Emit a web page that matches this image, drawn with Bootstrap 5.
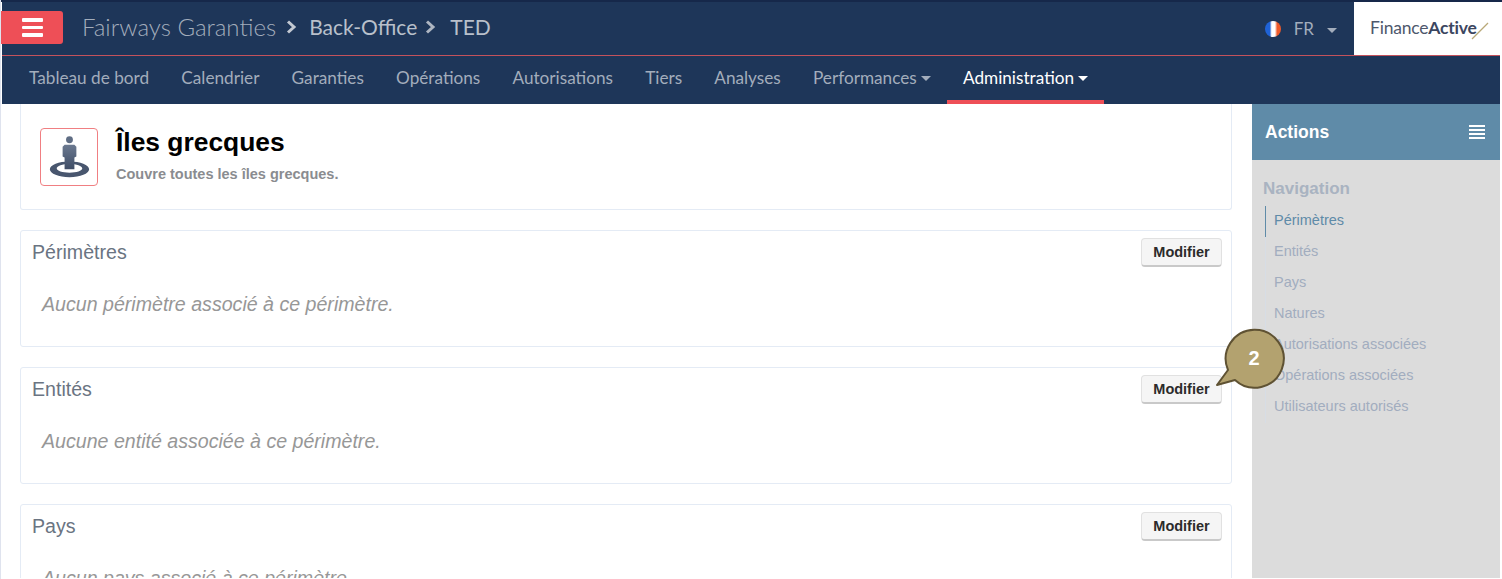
<!DOCTYPE html>
<html lang="fr">
<head>
<meta charset="utf-8">
<title>Fairways Garanties</title>
<link rel="stylesheet" href="https://cdn.jsdelivr.net/npm/bootstrap@5.3.0/dist/css/bootstrap.min.css">
<style>
html,body{height:579px;overflow:hidden;background:#fff}
body{font-family:"Liberation Sans",Arial,sans-serif;position:relative}
.shell{height:579px;padding:2px 2px 1px 1px;background:#fff;border-left:1px solid #dfe3ee;display:flex;flex-direction:column;overflow:hidden;box-shadow:inset 0 2px 0 #16284a}
.topbar{height:54px;flex:none;background:#1e3659;border-bottom:1px solid #c4525c;font-family:Lato,sans-serif}
.burger{width:62px;height:33px;margin:9px 0 0 -1px;background:#ee4f57;border-radius:0 3px 3px 0;border:0;padding:0;display:flex;flex-direction:column;gap:4px;align-items:center;justify-content:center}
.burger span{display:block;width:21px;height:3.5px;background:#fff;border-radius:1px}
.crumbs{margin-left:19px;padding-bottom:4px;color:#a3adbc;font-weight:300;display:flex;align-items:center;font-size:24px;line-height:26px}
.crumbs b{font-weight:400;color:#b9c0cb;font-size:21px}
.crumbs svg{flex:none}
.crumbs .sep1{margin:0 12px 0 10px}
.crumbs .sep2{margin:0 14px 0 8px}
.lang{color:#a3adbc;font-size:17px;margin-right:17px;gap:13px}
.flagdot{width:16px;height:16px;border-radius:50%;background:linear-gradient(90deg,#1f62d6 0 30%,#fff 42% 62%,#ee5a2a 76%)}
.caretdown{display:inline-block;border-left:5px solid transparent;border-right:5px solid transparent;border-top:5px solid currentColor}
.lang .caretdown{margin-top:3px}
.logobox{width:146px;height:53px;background:#fff;display:flex;align-items:center;color:#4e586c;font-size:17.5px;letter-spacing:-.2px;position:relative;padding:0 0 0 16px;font-family:Lato,sans-serif}
.logobox b{font-weight:700;color:#3b4660}
.logobox svg{position:absolute;left:114px;top:18px}
.mainnav{height:48px;flex:none;background:#1e3659;font-family:Lato,sans-serif;padding-left:11px}
.mainnav a{display:flex;align-items:center;height:48px;padding:0 16.1px;font-size:17.2px;color:#a3adbc;text-decoration:none;gap:4px;padding-bottom:4px;white-space:nowrap}
.mainnav a.on{color:#fff;border-bottom:4px solid #ee4f57;padding-bottom:0}
.bodyrow{flex:1;min-height:0;overflow:hidden}
.leftcol{width:1250px;flex:none;padding:0 20px 0 18px;overflow:hidden}
.panelbox{background:#fff;border:1px solid #e4ebf5;border-radius:3px;margin-bottom:20px}
.headbox{height:106px;border-top:0;border-radius:0 0 3px 3px;padding:24px 19px 0;gap:18px}
.iconbox{width:58px;height:58px;border:1px solid #f07f82;border-radius:4px;flex:none;overflow:hidden}
.iconbox svg{display:block}
.headbox h1{font-size:26.4px;font-weight:700;color:#000;line-height:32px;margin:-2px 0 6px}
.headbox p{font-size:14.5px;font-weight:700;color:#8a8c90;margin:0;line-height:20px}
.secbox{height:117px;padding:7px 9px 0 11px}
.secbox h2{font-size:19.6px;font-weight:400;color:#6a7482;margin:-1px 0 0;line-height:30px}
.btnmod{font-size:14.5px;font-weight:700;color:#2b2b2b;background:#f5f5f5;border:1px solid #e1e1e1;border-bottom:2px solid #c9c9c9;border-radius:4px;padding:0;width:81px;height:29px;line-height:25px}
.secbox p{font-size:19.6px;font-style:italic;color:#979797;margin:0;padding:22px 0 0 10px;line-height:30px}
.sidecol{flex:1;background:#dcdcdc}
.sidehead{height:56px;background:#5f8ba8;color:#fff;font-weight:700;font-size:17.5px;padding:0 15px 0 13px}
.burgerlines{display:flex;flex-direction:column;gap:2px}
.burgerlines span{display:block;width:16px;height:2px;background:#fff}
.sidetitle{font-size:17px;font-weight:700;color:#a9b3c1;margin:17px 0 5px 11px;line-height:24px}
.sidelist{margin:0 0 0 13px;padding:0;list-style:none}
.sidelist li{height:31px;line-height:28px;padding-left:8px;font-size:14.5px;color:#a2adbf;border-left:1px solid #d7dde5;white-space:nowrap}
.sidelist li.on{color:#5f8ba8;border-left-color:#5f8ba8}
.bubble{position:absolute;left:1212px;top:324px}
</style>
</head>
<body>
<div class="shell">
  <header class="topbar d-flex">
    <button class="burger" aria-label="Menu"><span></span><span></span><span></span></button>
    <div class="crumbs">Fairways Garanties
      <svg class="sep1" width="11" height="14" viewBox="0 0 11 14"><path d="M2 1.500 8 7l-6 5.500" fill="none" stroke="#c3c9d2" stroke-width="3"/></svg><b>Back-Office</b>
      <svg class="sep2" width="11" height="14" viewBox="0 0 11 14"><path d="M2 1.500 8 7l-6 5.500" fill="none" stroke="#aeb6c2" stroke-width="3"/></svg><b>TED</b>
    </div>
    <div class="ms-auto d-flex align-items-center lang"><span class="flagdot"></span><span>FR</span><span class="caretdown"></span></div>
    <div class="logobox"><span>Finance<b>Active</b></span><svg width="24" height="24" viewBox="0 0 24 24"><path d="M4 19 20 3" stroke="#b9a878" stroke-width="1.300" fill="none"/></svg></div>
  </header>
  <nav class="mainnav d-flex">
    <a href="#">Tableau de bord</a><a href="#">Calendrier</a><a href="#">Garanties</a><a href="#">Opérations</a><a href="#">Autorisations</a><a href="#">Tiers</a><a href="#">Analyses</a>
    <a href="#">Performances<span class="caretdown"></span></a>
    <a href="#" class="on">Administration<span class="caretdown"></span></a>
  </nav>
  <div class="bodyrow d-flex">
    <main class="leftcol">
      <section class="panelbox headbox d-flex">
        <div class="iconbox">
          <svg width="56" height="56" viewBox="0 0 57 57"><defs><linearGradient id="figfill" x1="0" y1="0" x2="0" y2="1"><stop offset="0" stop-color="#6b7990"/><stop offset="1" stop-color="#3f4d66"/></linearGradient></defs><path fill-rule="evenodd" d="M29 33c11 0 20 3.600 20 8s-9 8-20 8-20-3.600-20-8 9-8 20-8zm0 2.500c-7.200 0-13 2-13 4.500s5.800 4.500 13 4.500 13-2 13-4.500-5.800-4.500-13-4.500z" fill="#48566e"/><circle cx="29" cy="11" r="3.500" fill="#5f6d84"/><path d="M24 16h10l2 2v10l-2 1v12H24V29l-2-1V18z" fill="url(#figfill)"/></svg>
        </div>
        <div><h1>Îles grecques</h1><p>Couvre toutes les îles grecques.</p></div>
      </section>
      <section class="panelbox secbox">
        <div class="d-flex justify-content-between"><h2>Périmètres</h2><button class="btn btnmod">Modifier</button></div>
        <p>Aucun périmètre associé à ce périmètre.</p>
      </section>
      <section class="panelbox secbox">
        <div class="d-flex justify-content-between"><h2>Entités</h2><button class="btn btnmod">Modifier</button></div>
        <p>Aucune entité associée à ce périmètre.</p>
      </section>
      <section class="panelbox secbox">
        <div class="d-flex justify-content-between"><h2>Pays</h2><button class="btn btnmod">Modifier</button></div>
        <p>Aucun pays associé à ce périmètre.</p>
      </section>
    </main>
    <aside class="sidecol">
      <div class="sidehead d-flex align-items-center justify-content-between"><span>Actions</span><span class="burgerlines"><span></span><span></span><span></span><span></span></span></div>
      <div class="sidetitle">Navigation</div>
      <ul class="sidelist">
        <li class="on">Périmètres</li><li>Entités</li><li>Pays</li><li>Natures</li><li>Autorisations associées</li><li>Opérations associées</li><li>Utilisateurs autorisés</li>
      </ul>
    </aside>
  </div>
</div>
<svg class="bubble" width="76" height="72" viewBox="0 0 76 72"><path d="M16 46A29 29 0 1 1 23 56L5 61z" fill="#b3a26f" stroke="#5f5233" stroke-width="2" stroke-linejoin="round"/><text x="42" y="41" text-anchor="middle" font-family="Liberation Sans" font-weight="700" font-size="20" fill="#fff">2</text></svg>
</body>
</html>
